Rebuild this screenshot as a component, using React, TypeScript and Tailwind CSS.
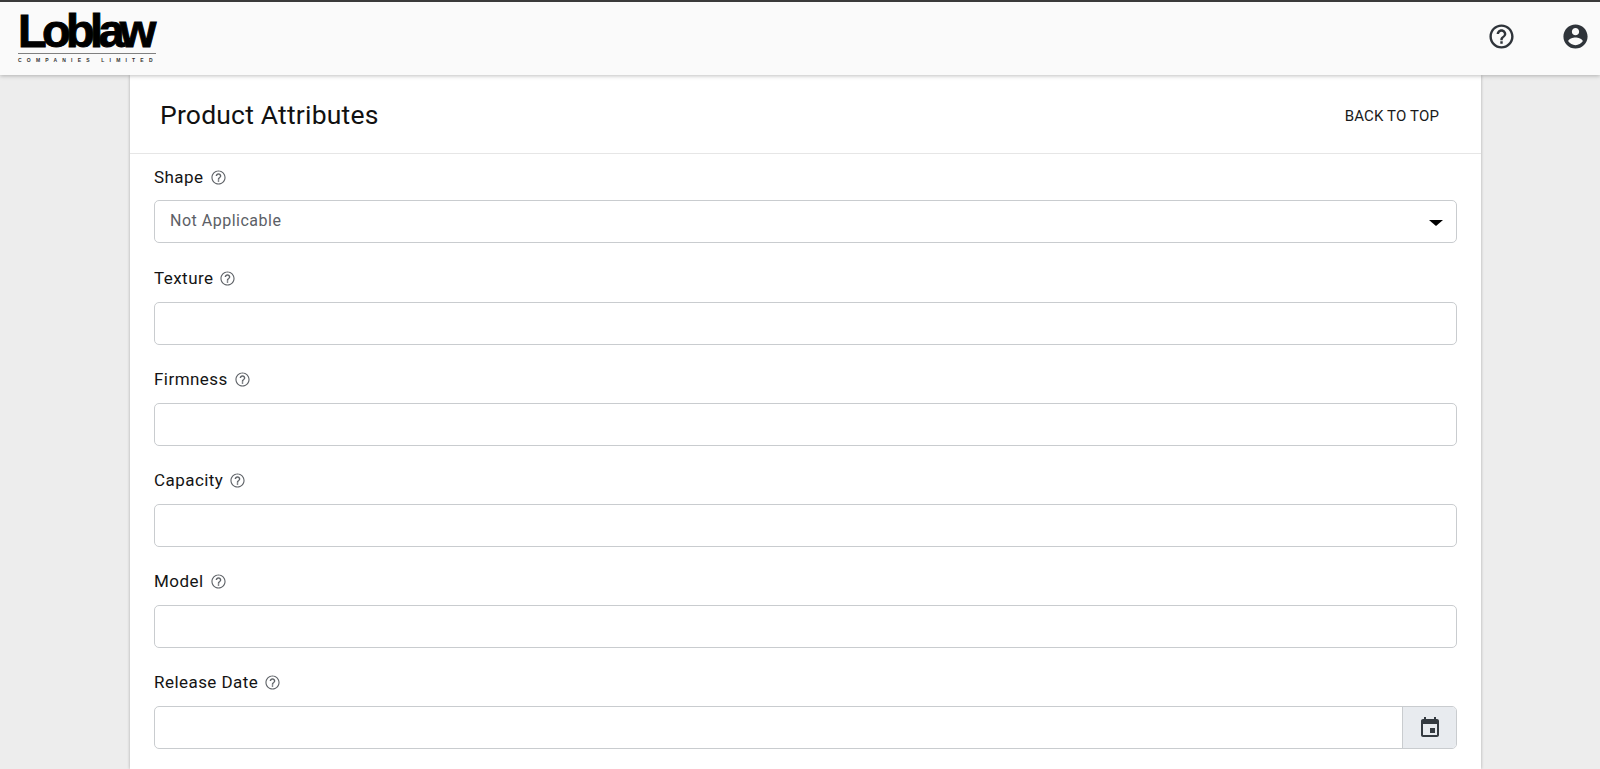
const roboto = { fontFamily: 'Roboto, "Liberation Sans", sans-serif' };

function HelpSmall() {
  return (
    <svg width="17" height="17" viewBox="0 0 24 24" fill="#5f6368" className="shrink-0">
      <path d="M11 18h2v-2h-2v2zm1-16C6.48 2 2 6.48 2 12s4.48 10 10 10 10-4.48 10-10S17.52 2 12 2zm0 18.4c-4.63 0-8.4-3.77-8.4-8.4S7.37 3.600 12 3.600s8.400 3.770 8.400 8.400-3.770 8.400-8.400 8.400zM12 6c-2.210 0-4 1.790-4 4h2c0-1.100.9-2 2-2s2 .9 2 2c0 2-3 1.750-3 5h2c0-2.250 3-2.500 3-5 0-2.210-1.790-4-4-4z" />
    </svg>
  );
}

function Label({ children }: { children: string }) {
  return (
    <div className="flex items-center gap-[6px] h-[24px] text-[17px] leading-[24px] text-[#141414] tracking-[0.45px]">
      <span>{children}</span>
      <HelpSmall />
    </div>
  );
}

function Field({ label }: { label: string }) {
  return (
    <div className="flex flex-col gap-[12px] mb-[22px]">
      <Label>{label}</Label>
      <div className="h-[43px] bg-white border border-[#c9cccf] rounded-[5px]" />
    </div>
  );
}

export default function App() {
  return (
    <div className="h-[769px] overflow-hidden bg-[#ededed] flex flex-col" style={roboto}>
      <header className="relative z-10 h-[75px] shrink-0 bg-[#fafafa] border-t-2 border-[#3a3a3a] shadow-[0_1px_4px_rgba(0,0,0,0.25)] flex items-center justify-between pl-[18px] pr-[10px]">
        <div className="flex flex-col w-[138px]">
          <div
            className="h-[37px] text-[47px] leading-[34px] font-bold text-black tracking-[-4.7px] whitespace-nowrap"
            style={{ fontFamily: '"Liberation Sans", Arial, sans-serif', WebkitTextStroke: '1px black' }}
          >
            Loblaw
          </div>
          <div className="h-px bg-[#808080] mt-[2px]" />
          <div
            className="text-[5px] leading-[8px] mt-[2px] font-bold text-[#333] tracking-[5.2px] whitespace-nowrap"
            style={{ fontFamily: '"Liberation Sans", Arial, sans-serif' }}
          >
            COMPANIES LIMITED
          </div>
        </div>
        <div className="flex items-center gap-[45px] mb-[4px]">
          <svg width="29" height="29" viewBox="0 0 24 24" fill="#2f343a">
            <path d="M11 18h2v-2h-2v2zm1-16C6.48 2 2 6.48 2 12s4.48 10 10 10 10-4.48 10-10S17.52 2 12 2zm0 18c-4.410 0-8-3.590-8-8s3.590-8 8-8 8 3.590 8 8-3.590 8-8 8zm0-14c-2.210 0-4 1.790-4 4h2c0-1.100.9-2 2-2s2 .9 2 2c0 2-3 1.750-3 5h2c0-2.250 3-2.500 3-5 0-2.210-1.790-4-4-4z" />
          </svg>
          <svg width="29" height="29" viewBox="0 0 24 24" fill="#2f343a">
            <path d="M12 2C6.480 2 2 6.480 2 12s4.480 10 10 10 10-4.480 10-10S17.520 2 12 2zm0 3c1.660 0 3 1.340 3 3s-1.340 3-3 3-3-1.340-3-3 1.340-3 3-3zm0 14.200c-2.500 0-4.710-1.280-6-3.220.03-1.990 4-3.080 6-3.080 1.990 0 5.970 1.090 6 3.080-1.290 1.940-3.500 3.220-6 3.220z" />
          </svg>
        </div>
      </header>

      <main className="ml-[130px] mr-[119px] flex-1 min-h-0 bg-white shadow-[0_0_3px_rgba(0,0,0,0.28)]">
        <div className="h-[79px] border-b border-[#e6e6e6] flex items-center justify-between pl-[30px] pr-[42px]">
          <h1 className="text-[26.5px] leading-[32px] font-normal text-[#111] mt-[1px] tracking-[0.2px]">Product Attributes</h1>
          <span className="text-[15px] leading-[20px] text-[#1a1a1a] tracking-[0.15px] mt-[4px]">BACK TO TOP</span>
        </div>
        <div className="pl-[24px] pr-[24px] pt-[11px]">
          <div className="flex flex-col gap-[11px] mb-[23px]">
            <Label>Shape</Label>
            <div className="relative h-[43px] border border-[#c9cccf] rounded-[5px] flex items-center pl-[15px] pb-[1px] text-[16px] text-[#5c6066] tracking-[0.5px]">
              Not Applicable
              <div className="absolute right-[13px] top-[19px] w-0 h-0 border-x-[7px] border-x-transparent border-t-[6px] border-t-black" />
            </div>
          </div>
          <Field label="Texture" />
          <Field label="Firmness" />
          <Field label="Capacity" />
          <Field label="Model" />
          <div className="flex flex-col gap-[12px]">
            <Label>Release Date</Label>
            <div className="h-[43px] bg-white border border-[#c9cccf] rounded-[5px] flex justify-end overflow-hidden">
              <div className="w-[54px] bg-[#e8ebef] border-l border-[#c9cccf] flex items-center justify-center">
                <svg width="24" height="24" viewBox="0 0 24 24" fill="#343a40">
                  <path d="M17 12h-5v5h5v-5zM16 1v2H8V1H6v2H5c-1.110 0-1.990.9-1.990 2L3 19c0 1.100.89 2 2 2h14c1.100 0 2-.9 2-2V5c0-1.100-.9-2-2-2h-1V1h-2zm3 18H5V8h14v11z" />
                </svg>
              </div>
            </div>
          </div>
        </div>
      </main>
    </div>
  );
}
